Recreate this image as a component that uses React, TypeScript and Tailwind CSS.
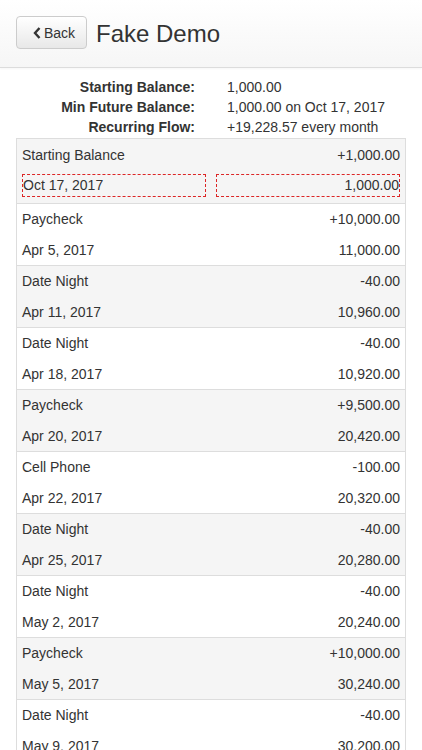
import React from "react";

type Item = { name: string; amount: string; date: string; balance: string };

const items: Item[] = [
  { name: "Paycheck", amount: "+10,000.00", date: "Apr 5, 2017", balance: "11,000.00" },
  { name: "Date Night", amount: "-40.00", date: "Apr 11, 2017", balance: "10,960.00" },
  { name: "Date Night", amount: "-40.00", date: "Apr 18, 2017", balance: "10,920.00" },
  { name: "Paycheck", amount: "+9,500.00", date: "Apr 20, 2017", balance: "20,420.00" },
  { name: "Cell Phone", amount: "-100.00", date: "Apr 22, 2017", balance: "20,320.00" },
  { name: "Date Night", amount: "-40.00", date: "Apr 25, 2017", balance: "20,280.00" },
  { name: "Date Night", amount: "-40.00", date: "May 2, 2017", balance: "20,240.00" },
  { name: "Paycheck", amount: "+10,000.00", date: "May 5, 2017", balance: "30,240.00" },
  { name: "Date Night", amount: "-40.00", date: "May 9, 2017", balance: "30,200.00" },
  { name: "Date Night", amount: "-40.00", date: "May 16, 2017", balance: "30,160.00" },
];

export default function App() {
  return (
    <div
      className="h-[750px] overflow-hidden bg-white text-[#333] text-[14px]"
      style={{ fontFamily: '"Liberation Sans", Arial, Helvetica, sans-serif' }}
    >
      {/* Header */}
      <div className="h-[68px] border-b border-[#dcdcdc] bg-gradient-to-b from-white to-[#f6f6f6] shadow-[0_1px_2px_rgba(0,0,0,0.04)] flex items-start pl-[16px] pt-[16px]">
        <button className="w-[71px] h-[33px] rounded-[4px] border border-[#ccc] bg-gradient-to-b from-white to-[#e8e8e8] flex items-center pl-[16px] pt-[1px] text-[14px] text-[#333]">
          <svg width="8" height="12" viewBox="0 0 8 12" className="mr-[3px]">
            <path d="M6.5 1 L2 6 L6.5 11" fill="none" stroke="#333" strokeWidth="2.4" strokeLinejoin="miter" />
          </svg>
          Back
        </button>
        <div className="ml-[9px] text-[24px] leading-[33px] pt-[1px] text-[#333]">Fake Demo</div>
      </div>

      {/* Summary */}
      <div className="pt-[9px] pb-[1px]">
        <div className="grid grid-cols-[195px_1fr] leading-[20px]">
          <div className="text-right font-bold">Starting Balance:</div>
          <div className="pl-[32px]">1,000.00</div>
          <div className="text-right font-bold">Min Future Balance:</div>
          <div className="pl-[32px]">1,000.00 on Oct 17, 2017</div>
          <div className="text-right font-bold">Recurring Flow:</div>
          <div className="pl-[32px]">+19,228.57 every month</div>
        </div>
      </div>

      {/* Table */}
      <div className="mx-[16px] border border-[#ddd] leading-[20px]">
        <div className="bg-[#f5f5f5]">
          <div className="flex justify-between px-[5px] pt-[6px] pb-[5px]">
            <span>Starting Balance</span>
            <span>+1,000.00</span>
          </div>
          <div className="flex gap-[10px] px-[5px] pt-[4px] pb-[6px]">
            <div className="flex-1 border border-dashed border-[#dc2626] leading-[21px]">Oct 17, 2017</div>
            <div className="flex-1 border border-dashed border-[#dc2626] leading-[21px] text-right">1,000.00</div>
          </div>
        </div>
        {items.map((it, i) => (
          <div key={i} className={`border-t border-[#ddd] ${i % 2 === 1 ? "bg-[#f5f5f5]" : "bg-white"}`}>
            <div className="flex justify-between px-[5px] pt-[5px] pb-[5px]">
              <span>{it.name}</span>
              <span>{it.amount}</span>
            </div>
            <div className="flex justify-between px-[5px] pt-[6px] pb-[5px]">
              <span>{it.date}</span>
              <span>{it.balance}</span>
            </div>
          </div>
        ))}
      </div>
    </div>
  );
}
